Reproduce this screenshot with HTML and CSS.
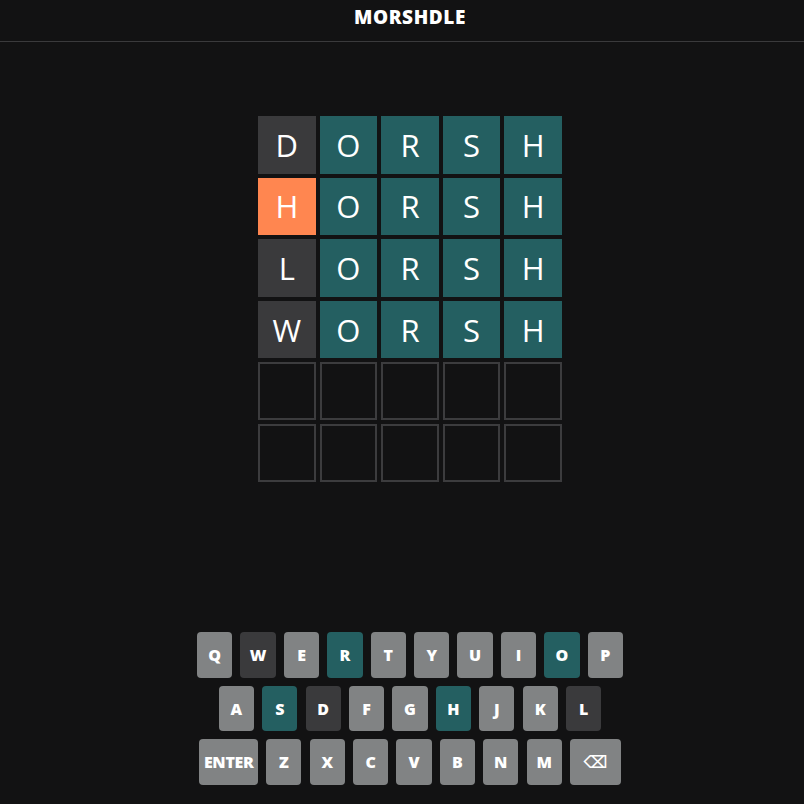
FILE: index.html
```html
<!DOCTYPE html>
<html lang="en">
<head>
<meta charset="utf-8">
<title>Morshdle</title>
<link rel="stylesheet" href="styles.css">
</head>
<body>
<div class="app">
  <header class="header"><h1 class="title">MORSHDLE</h1></header>
  <main class="main">
    <div class="board">
      <div class="tile absent">D</div><div class="tile correct">O</div><div class="tile correct">R</div><div class="tile correct">S</div><div class="tile correct">H</div>
      <div class="tile present">H</div><div class="tile correct">O</div><div class="tile correct">R</div><div class="tile correct">S</div><div class="tile correct">H</div>
      <div class="tile absent">L</div><div class="tile correct">O</div><div class="tile correct">R</div><div class="tile correct">S</div><div class="tile correct">H</div>
      <div class="tile absent">W</div><div class="tile correct">O</div><div class="tile correct">R</div><div class="tile correct">S</div><div class="tile correct">H</div>
      <div class="tile empty"></div><div class="tile empty"></div><div class="tile empty"></div><div class="tile empty"></div><div class="tile empty"></div>
      <div class="tile empty"></div><div class="tile empty"></div><div class="tile empty"></div><div class="tile empty"></div><div class="tile empty"></div>
    </div>
    <div class="keyboard">
      <div class="krow">
        <div class="key">Q</div><div class="key k-absent">W</div><div class="key">E</div><div class="key k-correct">R</div><div class="key">T</div><div class="key">Y</div><div class="key">U</div><div class="key">I</div><div class="key k-correct">O</div><div class="key">P</div>
      </div>
      <div class="krow">
        <div class="key">A</div><div class="key k-correct">S</div><div class="key k-absent">D</div><div class="key">F</div><div class="key">G</div><div class="key k-correct">H</div><div class="key">J</div><div class="key">K</div><div class="key k-absent">L</div>
      </div>
      <div class="krow">
        <div class="key key-enter">ENTER</div><div class="key">Z</div><div class="key">X</div><div class="key">C</div><div class="key">V</div><div class="key">B</div><div class="key">N</div><div class="key">M</div><div class="key key-back">⌫</div>
      </div>
    </div>
  </main>
</div>
</body>
</html>
```
FILE: styles.css
```css
* { box-sizing: border-box; }
html, body {
  margin: 0;
  padding: 0;
  background: #121213;
  overflow: hidden;
}
body {
  font-family: "Open Sans", "DejaVu Sans", sans-serif;
  color: #ffffff;
}
.app {
  height: 804px;
  padding-left: 16px;
  display: flex;
  flex-direction: column;
}
.header {
  height: 42px;
  margin-left: -16px;
  border-bottom: 1px solid #3a3a3c;
  display: flex;
  justify-content: center;
  padding-left: 16px;
}
.title {
  margin: 0;
  padding-top: 4px;
  font-size: 19px;
  font-weight: 800;
  letter-spacing: 0.6px;
  line-height: normal;
}
.main {
  flex: 1;
  display: flex;
  flex-direction: column;
  align-items: center;
}
.board {
  margin-top: 74px;
  display: grid;
  grid-template-columns: repeat(5, 57.6px);
  grid-auto-rows: 57.6px;
  gap: 4px;
}
.tile {
  display: flex;
  align-items: center;
  justify-content: center;
  font-size: 31px;
  font-weight: 400;
  color: #ffffff;
}
.tile.empty { border: 2px solid #3c3c3e; }
.tile.absent { background: #3a3a3c; }
.tile.correct { background: #245f61; }
.tile.present { background: #ff8650; }
.keyboard {
  margin-top: auto;
  padding-bottom: 19px;
  display: flex;
  flex-direction: column;
  align-items: center;
  gap: 8px;
}
.krow {
  display: flex;
  gap: 8.1px;
}
.key {
  width: 35.3px;
  height: 45.6px;
  border-radius: 4px;
  background: #818384;
  display: flex;
  align-items: center;
  justify-content: center;
  font-size: 16px;
  font-weight: 800;
  color: #ffffff;
}
.key.k-absent { background: #3a3a3c; }
.key.k-correct { background: #245f61; }
.key-enter { width: 58.7px; letter-spacing: -0.3px; }
.key-back { width: 50.7px; font-family: "DejaVu Sans", sans-serif; font-size: 17px; font-weight: 700; }
```
